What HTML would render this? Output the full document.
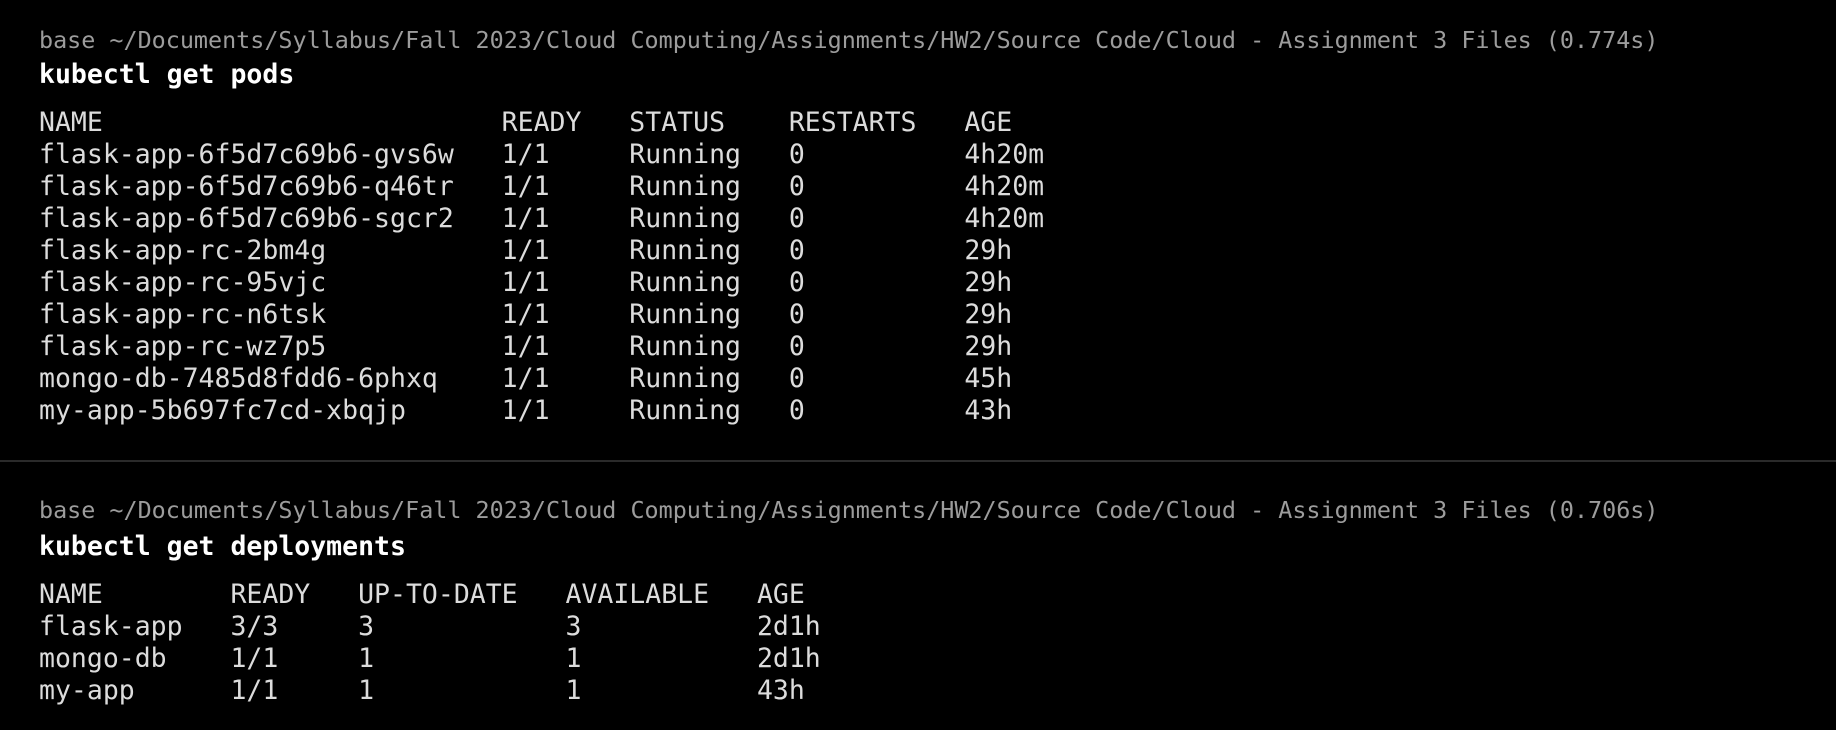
<!DOCTYPE html>
<html><head><meta charset="utf-8"><style>
html,body{margin:0;padding:0;background:#000;width:1836px;height:730px;overflow:hidden}
.l{position:absolute;left:39px;font-family:"DejaVu Sans Mono","Liberation Mono",monospace;font-size:26.5px;line-height:32px;white-space:pre;color:#dcdcdc}
.p{color:#9c9c9c;font-size:23.4px}
.b{color:#fff;font-weight:bold}
.hr{position:absolute;left:0;width:1836px;top:460px;height:2px;background:#2a2a2a}
</style></head><body>
<div class="l p" style="top:24px">base ~/Documents/Syllabus/Fall 2023/Cloud Computing/Assignments/HW2/Source Code/Cloud - Assignment 3 Files (0.774s)</div>
<div class="l b" style="top:59px">kubectl get pods</div>
<div class="l" style="top:107px">NAME                         READY   STATUS    RESTARTS   AGE
flask-app-6f5d7c69b6-gvs6w   1/1     Running   0          4h20m
flask-app-6f5d7c69b6-q46tr   1/1     Running   0          4h20m
flask-app-6f5d7c69b6-sgcr2   1/1     Running   0          4h20m
flask-app-rc-2bm4g           1/1     Running   0          29h
flask-app-rc-95vjc           1/1     Running   0          29h
flask-app-rc-n6tsk           1/1     Running   0          29h
flask-app-rc-wz7p5           1/1     Running   0          29h
mongo-db-7485d8fdd6-6phxq    1/1     Running   0          45h
my-app-5b697fc7cd-xbqjp      1/1     Running   0          43h</div>
<div class="hr"></div>
<div class="l p" style="top:494px">base ~/Documents/Syllabus/Fall 2023/Cloud Computing/Assignments/HW2/Source Code/Cloud - Assignment 3 Files (0.706s)</div>
<div class="l b" style="top:531px">kubectl get deployments</div>
<div class="l" style="top:579px">NAME        READY   UP-TO-DATE   AVAILABLE   AGE
flask-app   3/3     3            3           2d1h
mongo-db    1/1     1            1           2d1h
my-app      1/1     1            1           43h</div>
</body></html>
